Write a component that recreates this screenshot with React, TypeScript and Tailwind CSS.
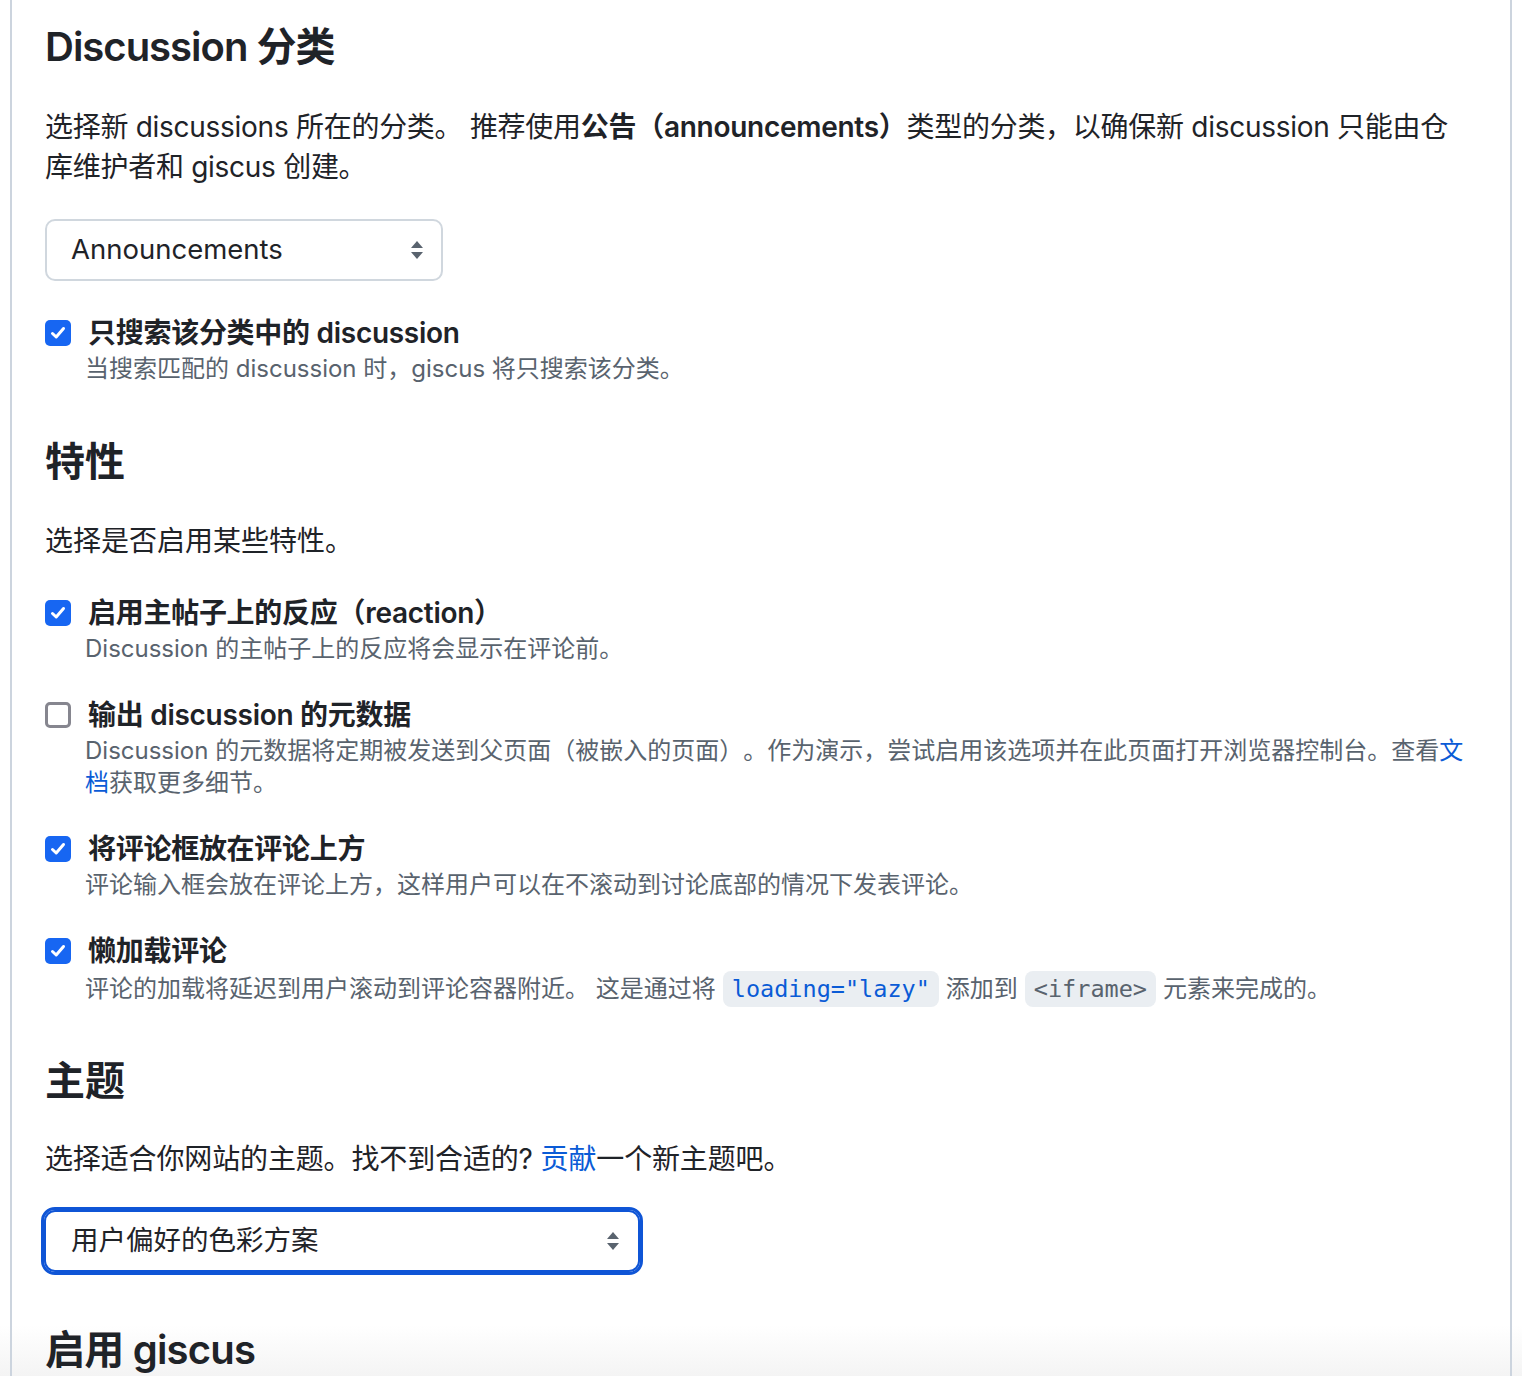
import { useState } from 'react';

const SelectArrows = () => (
  <svg width="16" height="22" viewBox="0 0 16 22" className="shrink-0">
    <path d="M8 2 L14 9 L2 9 Z" fill="#59636e" />
    <path d="M8 20 L14 13 L2 13 Z" fill="#59636e" />
  </svg>
);

const Check = ({ checked, onClick }: { checked: boolean; onClick: () => void }) => (
  <button
    onClick={onClick}
    className={
      checked
        ? 'w-[26px] h-[26px] shrink-0 rounded-[5px] bg-[#1766f2] flex items-center justify-center'
        : 'w-[26px] h-[26px] shrink-0 rounded-[5px] bg-white border-[3px] border-[#86868f]'
    }
  >
    {checked && (
      <svg width="18" height="18" viewBox="0 0 18 18">
        <path d="M3.5 9.5 L7.2 13 L14.5 4.5" stroke="white" strokeWidth="3" fill="none" strokeLinecap="round" strokeLinejoin="round" />
      </svg>
    )}
  </button>
);

const Option = ({
  label,
  children,
  initial,
  className = '',
}: {
  label: string;
  children: React.ReactNode;
  initial: boolean;
  className?: string;
}) => {
  const [checked, setChecked] = useState(initial);
  return (
    <div className={className}>
      <div className="flex items-center h-[36px]">
        <Check checked={checked} onClick={() => setChecked(!checked)} />
        <span className="ml-[17px] text-[28px] leading-[36px] font-semibold tracking-[-0.01em] text-[#1f2328]">{label}</span>
      </div>
      <p className="mt-[2px] pl-[40px] text-[24px] leading-[32px] text-[#59636e]">{children}</p>
    </div>
  );
};

const Code = ({ children, link }: { children: string; link?: boolean }) => (
  <code
    className={
      'inline-block mx-[7px] px-[9px] rounded-[8px] bg-[#eaeef2] leading-[36px] text-[23.5px] ' +
      (link ? 'text-[#0a5bd6]' : 'text-[#59636e]')
    }
    style={{ fontFamily: '"DejaVu Sans Mono", "Liberation Mono", monospace' }}
  >
    {children}
  </code>
);

export default function App() {
  return (
    <div
      className="relative min-h-[1376px] bg-white overflow-hidden [text-spacing-trim:space-all]"
      style={{ fontFamily: 'Inter, "Noto Sans CJK SC", sans-serif' }}
    >
      <div className="absolute left-0 right-0 top-[1325px] h-[51px] bg-gradient-to-b from-white to-[#f4f4f4]" />
      <div className="relative mx-[10px] min-h-[1376px] border-x-2 border-[#ccd4de] pl-[33px] pr-[43px] pt-[22px]">
        <h2 className="text-[40px] leading-[50px] font-semibold tracking-[-0.025em] text-[#1f2328]">Discussion 分类</h2>
        <p className="mt-[35px] text-[28px] leading-[40px] tracking-[-0.01em] text-[#1f2328]">
          选择新 discussions 所在的分类。 推荐使用<strong className="font-semibold">公告（announcements）</strong>类型的分类，以确保新 discussion 只能由仓库维护者和 giscus 创建。
        </p>
        <div className="mt-[32px] w-[398px] h-[62px] rounded-[10px] border-2 border-[#d0d7de] flex items-center justify-between pl-[24px] pr-[16px]">
          <span className="text-[27.5px] text-[#1f2328]">Announcements</span>
          <SelectArrows />
        </div>
        <Option className="mt-[34px]" label="只搜索该分类中的 discussion" initial={true}>
          当搜索匹配的 discussion 时，giscus 将只搜索该分类。
        </Option>

        <h2 className="mt-[52px] text-[40px] leading-[50px] font-semibold text-[#1f2328]">特性</h2>
        <p className="mt-[34px] text-[28px] leading-[40px] text-[#1f2328]">选择是否启用某些特性。</p>
        <Option className="mt-[34px]" label="启用主帖子上的反应（reaction）" initial={true}>
          Discussion 的主帖子上的反应将会显示在评论前。
        </Option>
        <Option className="mt-[32px]" label="输出 discussion 的元数据" initial={false}>
          Discussion 的元数据将定期被发送到父页面（被嵌入的页面）。作为演示，尝试启用该选项并在此页面打开浏览器控制台。查看
          <a className="text-[#0a5bd6]">文档</a>获取更多细节。
        </Option>
        <Option className="mt-[32px]" label="将评论框放在评论上方" initial={true}>
          评论输入框会放在评论上方，这样用户可以在不滚动到讨论底部的情况下发表评论。
        </Option>
        <Option className="mt-[32px]" label="懒加载评论" initial={true}>
          评论的加载将延迟到用户滚动到评论容器附近。 这是通过将<Code link>loading="lazy"</Code>添加到<Code>{'<iframe>'}</Code>元素来完成的。
        </Option>

        <h2 className="mt-[49px] text-[40px] leading-[50px] font-semibold text-[#1f2328]">主题</h2>
        <p className="mt-[33px] text-[28px] leading-[40px] tracking-[-0.005em] text-[#1f2328]">
          选择适合你网站的主题。找不到合适的? <a className="text-[#0a5bd6]">贡献</a>一个新主题吧。
        </p>
        <div className="mt-[31px] -ml-[1px] w-[596px] h-[62px] rounded-[11px] border-2 border-[#0f55d6] outline-[3px] outline-[#0f55d6] flex items-center justify-between pl-[25px] pr-[17px]">
          <span className="text-[27.5px] text-[#1f2328]">用户偏好的色彩方案</span>
          <SelectArrows />
        </div>

        <h2 className="mt-[53px] text-[40px] leading-[50px] font-semibold tracking-[-0.02em] text-[#1f2328]">启用 giscus</h2>
      </div>
    </div>
  );
}
